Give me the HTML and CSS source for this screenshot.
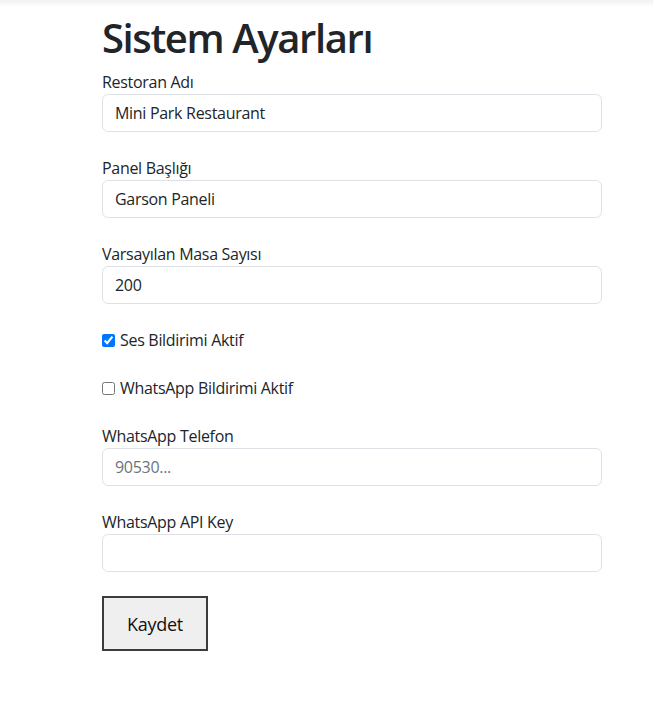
FILE: index.html
```html
<!DOCTYPE html>
<html lang="tr">
<head>
<meta charset="utf-8">
<title>Sistem Ayarları</title>
<link rel="stylesheet" href="styles.css">
</head>
<body>
<div class="topband"></div>
<main class="page">
  <h1 class="title">Sistem Ayarları</h1>
  <div class="group">
    <label class="label" for="r">Restoran Adı</label>
    <input class="field" id="r" type="text" value="Mini Park Restaurant">
  </div>
  <div class="group">
    <label class="label" for="p">Panel Başlığı</label>
    <input class="field" id="p" type="text" value="Garson Paneli">
  </div>
  <div class="group">
    <label class="label" for="m">Varsayılan Masa Sayısı</label>
    <input class="field" id="m" type="text" value="200">
  </div>
  <div class="group check">
    <input class="box" id="s" type="checkbox" checked>
    <label for="s">Ses Bildirimi Aktif</label>
  </div>
  <div class="group check">
    <input class="box" id="w" type="checkbox">
    <label for="w">WhatsApp Bildirimi Aktif</label>
  </div>
  <div class="group">
    <label class="label" for="t">WhatsApp Telefon</label>
    <input class="field" id="t" type="text" placeholder="90530...">
  </div>
  <div class="group">
    <label class="label" for="k">WhatsApp API Key</label>
    <input class="field" id="k" type="text">
  </div>
  <button class="save" type="button">Kaydet</button>
</main>
</body>
</html>
```
FILE: styles.css
```css
html, body {
  margin: 0;
  padding: 0;
  background: #fff;
}
body {
  font-family: "Open Sans", "Noto Sans", sans-serif;
  font-size: 16px;
  line-height: 24px;
  letter-spacing: -0.3px;
  color: #212529;
}
.topband {
  height: 7px;
  background: linear-gradient(#f1f1f1, #ffffff);
}
.page {
  width: 500px;
  margin: 0 0 0 102px;
  padding: 7px 0 40px;
}
.title {
  margin: 0 0 8px;
  font-size: 40px;
  line-height: 48px;
  font-weight: 600;
  letter-spacing: -1.4px;
}
.group {
  margin-bottom: 24px;
}
.label {
  display: block;
}
.field {
  display: block;
  box-sizing: border-box;
  width: 100%;
  height: 38px;
  padding: 6px 12px;
  border: 1px solid #dee2e6;
  border-radius: 6px;
  font: inherit;
  letter-spacing: -0.3px;
  color: #212529;
  background: #fff;
  outline: none;
}
.field::placeholder {
  color: #6c757d;
}
.check {
  display: flex;
  align-items: center;
  height: 24px;
}
.box {
  margin: 0 5px 0 0;
  width: 13px;
  height: 13px;
  accent-color: #0075ff;
}
.save {
  box-sizing: border-box;
  width: 106px;
  height: 55px;
  padding: 0;
  border: 2px solid #3c3c3c;
  background: #efefef;
  font-family: inherit;
  font-size: 18px;
  letter-spacing: -0.3px;
  color: #111;
}
```
